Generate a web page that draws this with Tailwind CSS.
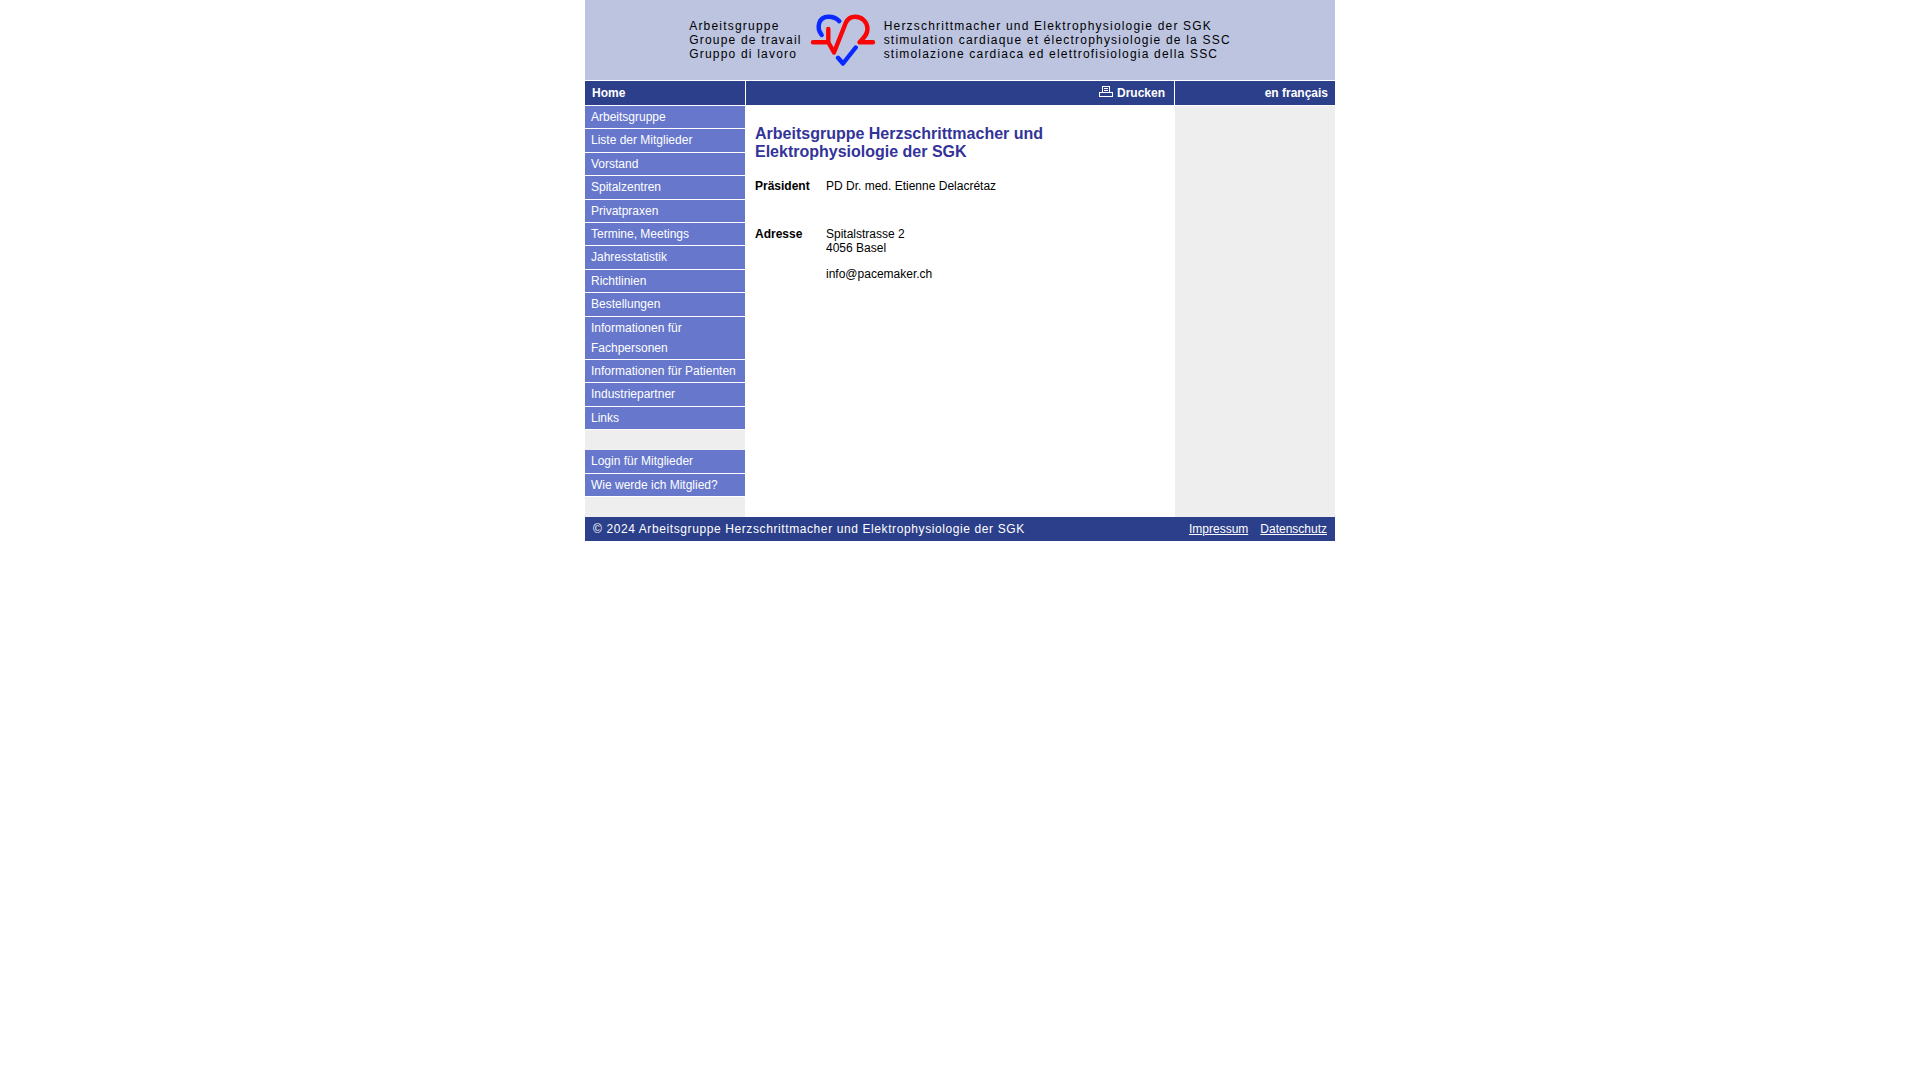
<!DOCTYPE html>
<html lang="de">
<head>
  <meta charset="UTF-8" />
  <meta name="viewport" content="width=device-width, initial-scale=1.0" />
  <title>Arbeitsgruppe Herzschrittmacher und Elektrophysiologie der SGK</title>
  <script src="https://cdn.jsdelivr.net/npm/@tailwindcss/browser@4"></script>
</head>
<body class="bg-white text-black text-[12px] leading-[14px] font-['Liberation_Sans',Arial,sans-serif]">

  <div class="max-w-[750px] mx-auto">

    <!-- Header -->
    <header class="bg-[#bcc4e0] flex justify-center gap-2 pt-[14px] pb-[14px] border-b border-white tracking-widest">
      <p class="pt-[5px]">Arbeitsgruppe<br />Groupe de travail<br />Gruppo di lavoro</p>
      <svg class="w-[66px] h-[52px] shrink-0" viewBox="10 8.500 66 52" fill="none" stroke-width="4.400" stroke-linecap="round" stroke-linejoin="round" role="img" aria-label="Logo">
        <path stroke="#0a28ff" d="M21.700 29.500C16 22 18.500 11.300 28.500 11.300C33 11.300 36.500 12.500 39.300 15.700" />
        <path stroke="#0a28ff" d="M38 52.300L43 58L55.700 42" />
        <path stroke="#fa0505" d="M13 36.800H28.300V23.500V36.800L34 47L45.700 17.500C48 12.700 51 11.300 55 11.300C62 11.300 67.500 16.500 67.500 23.500C67.500 29 64 32 59.500 36.800H73" />
      </svg>
      <p class="pt-[5px]">Herzschrittmacher und Elektrophysiologie der SGK<br />stimulation cardiaque et électrophysiologie de la SSC<br />stimolazione cardiaca ed elettrofisiologia della SSC</p>
    </header>

    <!-- Top bar -->
    <div class="grid grid-cols-[160px_1fr_160px] gap-x-px border-b border-white text-white font-bold leading-6">
      <a href="#" class="bg-[#2c3f8b] px-[7px]">Home</a>
      <div class="bg-[#2c3f8b] px-[9px] flex justify-end">
        <a href="#" class="flex gap-1">
          <svg class="w-[14px] h-[11px] mt-[5px]" viewBox="0 0 14 11" fill="none" stroke="#fff" shape-rendering="crispEdges" aria-hidden="true">
            <path d="M3.500 6.500V.5H10.500V6.500M5 2.500H9M5 4.500H9M.5 6.500H13.500V10.500H.5Z" />
          </svg>
          Drucken
        </a>
      </div>
      <a href="#" class="bg-[#2c3f8b] px-[7px] text-right">en français</a>
    </div>

    <div class="grid grid-cols-[160px_1fr_160px] gap-x-px">

      <!-- Navigation -->
      <nav class="bg-[#eeeeee] text-white leading-5 flex flex-col gap-5 pb-5">
        <ul class="flex flex-col min-h-[324px]">
          <li class="grow bg-[#6677cc] border-b border-white px-[6px] py-px"><a href="#" class="block">Arbeitsgruppe</a></li>
          <li class="grow bg-[#6677cc] border-b border-white px-[6px] py-px"><a href="#" class="block">Liste der Mitglieder</a></li>
          <li class="grow bg-[#6677cc] border-b border-white px-[6px] py-px"><a href="#" class="block">Vorstand</a></li>
          <li class="grow bg-[#6677cc] border-b border-white px-[6px] py-px"><a href="#" class="block">Spitalzentren</a></li>
          <li class="grow bg-[#6677cc] border-b border-white px-[6px] py-px"><a href="#" class="block">Privatpraxen</a></li>
          <li class="grow bg-[#6677cc] border-b border-white px-[6px] py-px"><a href="#" class="block">Termine, Meetings</a></li>
          <li class="grow bg-[#6677cc] border-b border-white px-[6px] py-px"><a href="#" class="block">Jahresstatistik</a></li>
          <li class="grow bg-[#6677cc] border-b border-white px-[6px] py-px"><a href="#" class="block">Richtlinien</a></li>
          <li class="grow bg-[#6677cc] border-b border-white px-[6px] py-px"><a href="#" class="block">Bestellungen</a></li>
          <li class="grow bg-[#6677cc] border-b border-white px-[6px] py-px"><a href="#" class="block">Informationen für Fachpersonen</a></li>
          <li class="grow bg-[#6677cc] border-b border-white px-[6px] py-px"><a href="#" class="block">Informationen für Patienten</a></li>
          <li class="grow bg-[#6677cc] border-b border-white px-[6px] py-px"><a href="#" class="block">Industriepartner</a></li>
          <li class="grow bg-[#6677cc] border-b border-white px-[6px] py-px"><a href="#" class="block">Links</a></li>
        </ul>
        <ul class="flex flex-col min-h-[47px]">
          <li class="grow bg-[#6677cc] border-b border-white px-[6px] py-px"><a href="#" class="block">Login für Mitglieder</a></li>
          <li class="grow bg-[#6677cc] border-b border-white px-[6px] py-px"><a href="#" class="block">Wie werde ich Mitglied?</a></li>
        </ul>
      </nav>

      <!-- Content -->
      <main class="px-[9px] pt-[19px]">
        <h1 class="text-[16px] leading-[18px] font-bold text-[#333399]">Arbeitsgruppe Herzschrittmacher und Elektrophysiologie der SGK</h1>
        <table class="mt-[18px] text-left">
          <tbody>
            <tr class="align-top">
              <th scope="row" class="w-[71px] pb-[34px] font-bold">Präsident</th>
              <td class="pb-[34px]">PD Dr. med. Etienne Delacrétaz</td>
            </tr>
            <tr class="align-top">
              <th scope="row" class="font-bold">Adresse</th>
              <td>
                <p>Spitalstrasse 2<br />4056 Basel</p>
                <p class="mt-3"><a href="mailto:info@pacemaker.ch">info@pacemaker.ch</a></p>
              </td>
            </tr>
          </tbody>
        </table>
      </main>

      <aside class="bg-[#eeeeee]"></aside>
    </div>

    <!-- Footer -->
    <footer class="bg-[#2c3f8b] text-white leading-6 px-2 flex justify-between">
      <p class="tracking-wider">© 2024 Arbeitsgruppe Herzschrittmacher und Elektrophysiologie der SGK</p>
      <div class="flex gap-3">
        <a href="#" class="underline">Impressum</a>
        <a href="#" class="underline">Datenschutz</a>
      </div>
    </footer>

  </div>

</body>
</html>
